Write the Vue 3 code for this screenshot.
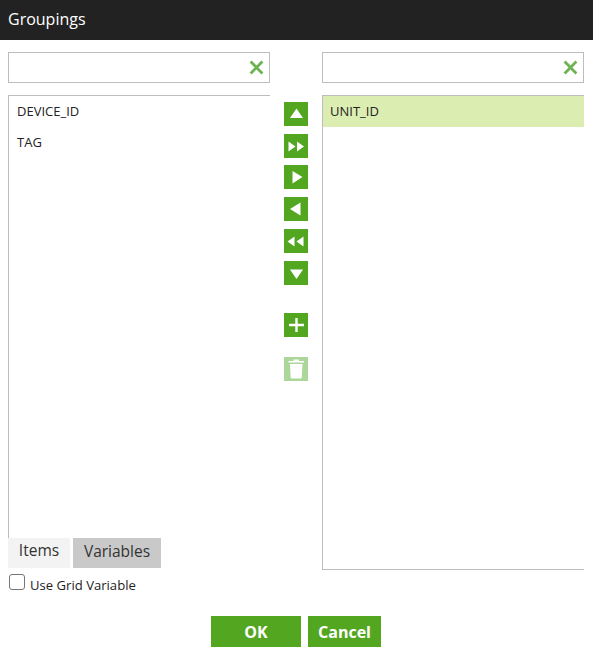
<script setup>
const leftItems = ['DEVICE_ID', 'TAG'];
const rightItems = ['UNIT_ID'];

const moveButtons = [
  { name: 'up', points: ['6,16 12.5,6.5 19,16'] },
  { name: 'all-right', points: ['4.5,7.5 11.5,12.5 4.5,17.5', '13,7.5 20,12.5 13,17.5'] },
  { name: 'right', points: ['8.5,6 18.5,12 8.5,18.5'], tight: true },
  { name: 'left', points: ['16.5,5.5 6,12 16.5,18.5'] },
  { name: 'all-left', points: ['10.5,7.5 3.5,12.5 10.5,17.5', '19.5,7.5 12.5,12.5 19.5,17.5'] },
  { name: 'down', points: ['6,8.5 19,8.5 12.5,18'] },
];
</script>

<template>
  <div class="dialog">
    <header class="title">Groupings</header>

    <div class="body">
      <div class="column">
        <div class="search">
          <svg class="clear" viewBox="0 0 14 14" width="15" height="15">
            <path d="M1.5 1.5 L12.5 12.5 M12.5 1.5 L1.5 12.5" />
          </svg>
        </div>
        <div class="list list-left">
          <div v-for="item in leftItems" :key="item" class="item">{{ item }}</div>
        </div>
        <div class="tabs">
          <div class="tab tab-on">Items</div>
          <div class="tab tab-off">Variables</div>
        </div>
        <label class="grid-var">
          <span class="check"></span>
          <span class="grid-label">Use Grid Variable</span>
        </label>
      </div>

      <div class="tools">
        <button v-for="b in moveButtons" :key="b.name" :class="['tool', b.tight ? 'tool-tight' : '']" type="button">
          <svg viewBox="0 0 24 24" width="24" height="24">
            <polygon v-for="p in b.points" :key="p" :points="p" fill="#fff" />
          </svg>
        </button>
        <button class="tool tool-add" type="button">
          <svg viewBox="0 0 24 24" width="24" height="24">
            <path d="M12.5 5 V19 M5 12 H20" stroke="#fff" stroke-width="2.4" fill="none" />
          </svg>
        </button>
        <button class="tool tool-trash" type="button">
          <svg viewBox="0 0 24 24" width="24" height="24">
            <path d="M4.5 4 H20 V5.5 H4.5 Z M6 7 H18.5 L17.8 20.5 Q17.7 21.5 16.8 21.5 H7.7 Q6.8 21.5 6.7 20.5 Z M9.5 2.5 H15 V4 H9.5 Z" fill="#fff" />
          </svg>
        </button>
      </div>

      <div class="column">
        <div class="search">
          <svg class="clear" viewBox="0 0 14 14" width="15" height="15">
            <path d="M1.5 1.5 L12.5 12.5 M12.5 1.5 L1.5 12.5" />
          </svg>
        </div>
        <div class="list list-right">
          <div v-for="item in rightItems" :key="item" class="item item-selected">{{ item }}</div>
        </div>
      </div>
    </div>

    <footer class="actions">
      <button class="action action-ok" type="button">OK</button>
      <button class="action action-cancel" type="button">Cancel</button>
    </footer>
  </div>
</template>

<style scoped>
.dialog {
  width: 593px;
  height: 656px;
  background: #fff;
  font-family: "Open Sans", "Liberation Sans", sans-serif;
  color: #222;
  display: flex;
  flex-direction: column;
  overflow: hidden;
}

.title {
  height: 40px;
  flex: none;
  box-sizing: border-box;
  padding-left: 8px;
  background: #222;
  color: #fff;
  font-size: 16px;
  line-height: 39px;
}

.body {
  display: flex;
  padding: 12px 9px 0 8px;
  height: 564px;
  box-sizing: border-box;
  flex: none;
}

.column {
  width: 262px;
  flex: none;
  display: flex;
  flex-direction: column;
}

.search {
  height: 31px;
  box-sizing: border-box;
  border: 1px solid #bdbdbd;
  flex: none;
  display: flex;
  align-items: center;
  justify-content: flex-end;
  padding-right: 5px;
}

.clear path {
  stroke: #6db353;
  stroke-width: 2.6;
  fill: none;
}

.list {
  margin-top: 12px;
  box-sizing: border-box;
  border-top: 1px solid #bdbdbd;
  border-left: 1px solid #bdbdbd;
}

.list-left {
  height: 443px;
  flex: none;
}

.list-left .item {
  padding-left: 8px;
}

.list-right {
  height: 475px;
  flex: none;
  border-bottom: 1px solid #bdbdbd;
}

.item {
  height: 31px;
  line-height: 31px;
  padding-left: 7px;
  font-size: 13px;
}

.item-selected {
  background: #dcedb1;
}

.tabs {
  display: flex;
  gap: 3px;
  height: 30px;
  flex: none;
}

.tab {
  font-size: 15.5px;
  line-height: 24px;
  text-align: center;
  color: #333;
}

.tab-on {
  width: 62px;
  background: #f3f3f3;
}

.tab-off {
  width: 88px;
  background: #c9c9c9;
  line-height: 26px;
}

.grid-var {
  display: flex;
  align-items: flex-start;
  gap: 5px;
  margin-top: 6px;
  margin-left: 1px;
  font-size: 13.1px;
  height: 16px;
}

.grid-label {
  line-height: 22px;
}

.check {
  width: 16px;
  height: 16px;
  box-sizing: border-box;
  border: 1px solid #767676;
  border-radius: 3px;
  background: #fff;
  flex: none;
}

.tools {
  width: 52px;
  flex: none;
  display: flex;
  flex-direction: column;
  align-items: center;
  padding-top: 50px;
  gap: 8px;
}

.tool {
  width: 24px;
  height: 24px;
  padding: 0;
  border: 0;
  background: #52a620;
  display: block;
  flex: none;
}

.tool-tight {
  margin-top: -1px;
}

.tool svg {
  display: block;
}

.tool-add {
  margin-top: 20px;
}

.tool-trash {
  margin-top: 12px;
  background: #add69a;
}

.actions {
  display: flex;
  gap: 7px;
  padding-left: 211px;
  margin-top: 12px;
}

.action {
  height: 31px;
  padding: 0;
  border: 0;
  background: #52a620;
  color: #fff;
  font-family: "Open Sans", "Liberation Sans", sans-serif;
  font-size: 16px;
  font-weight: 700;
}

.action-ok {
  width: 90px;
}

.action-cancel {
  width: 73px;
}
</style>
